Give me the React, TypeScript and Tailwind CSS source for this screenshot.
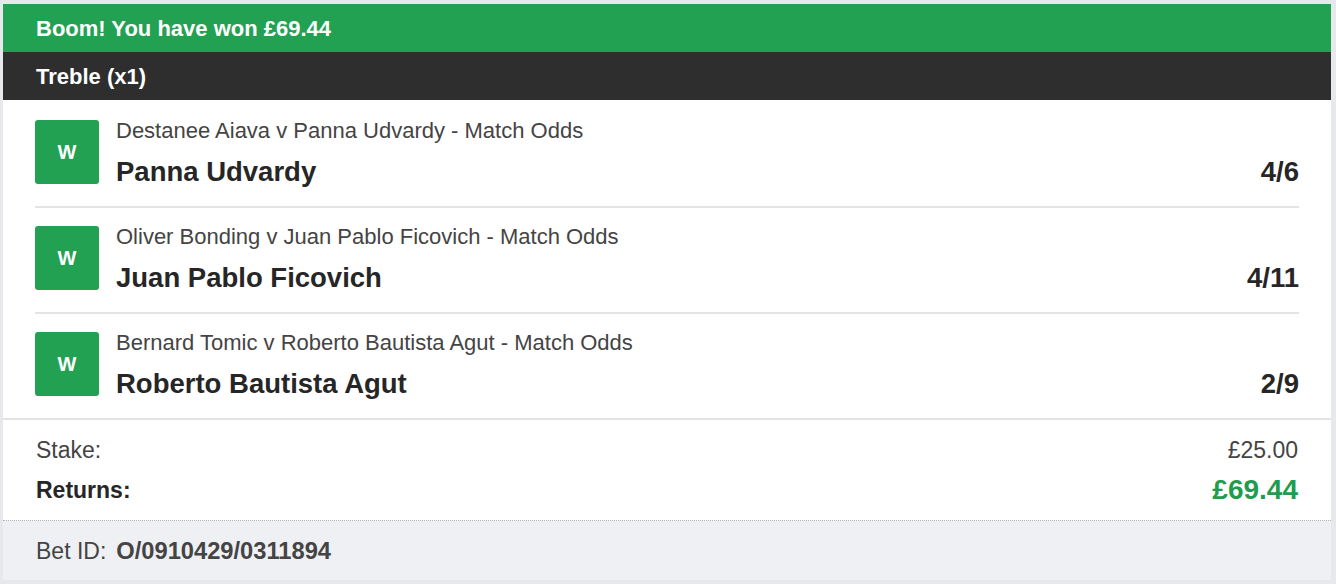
const LEGS = [
  { market: 'Destanee Aiava v Panna Udvardy - Match Odds', selection: 'Panna Udvardy', odds: '4/6' },
  { market: 'Oliver Bonding v Juan Pablo Ficovich - Match Odds', selection: 'Juan Pablo Ficovich', odds: '4/11' },
  { market: 'Bernard Tomic v Roberto Bautista Agut - Match Odds', selection: 'Roberto Bautista Agut', odds: '2/9' },
];

export default function App() {
  return (
    <div className="min-h-[584px] w-[1336px] bg-[#e6e8ec] pt-[4px] pb-[4px] pl-[3px] pr-[5px] font-['Liberation_Sans',Arial,sans-serif]">
      <div className="flex flex-col bg-white">
        {/* Win banner */}
        <div className="flex h-[48px] items-center bg-[#22a153] px-[33px] text-[22px] font-bold text-white">
          Boom! You have won £69.44
        </div>
        <div className="flex h-[48px] items-center bg-[#2e2e2e] px-[33px] text-[22px] font-bold text-white">
          Treble (x1)
        </div>

        {/* Legs */}
        <div className="flex flex-col">
          {LEGS.map((leg, i) => (
            <div
              key={leg.selection}
              className={`mx-[32px] flex items-start gap-[17px] pb-[22px] ${i === 0 ? 'pt-[20px]' : 'pt-[18px]'} ${
                i < LEGS.length - 1 ? 'border-b-2 border-[#e3e3e3]' : ''
              }`}
            >
              <div className="flex h-[64px] w-[64px] shrink-0 items-center justify-center rounded-[3px] bg-[#22a153] text-[20px] font-bold text-white">
                W
              </div>
              <div className="flex h-[64px] flex-1 flex-col justify-between">
                <div className="text-[22px] leading-[22px] text-[#444]">{leg.market}</div>
                <div className="flex items-center justify-between text-[27.5px] leading-[24px] font-bold text-[#262626]">
                  <span>{leg.selection}</span>
                  <span>{leg.odds}</span>
                </div>
              </div>
            </div>
          ))}
        </div>

        {/* Totals */}
        <div className="flex flex-col border-t-2 border-[#e3e3e3] px-[33px] pt-[15px] pb-[15px]">
          <div className="flex items-center justify-between text-[23px] leading-[30px] text-[#444]">
            <span>Stake:</span>
            <span>£25.00</span>
          </div>
          <div className="mt-[10px] flex items-center justify-between">
            <span className="text-[23px] leading-[30px] font-bold text-[#262626]">Returns:</span>
            <span className="text-[28px] leading-[30px] font-bold text-[#1f9c4e]">£69.44</span>
          </div>
        </div>

        <div className="flex h-[60px] items-center border-t border-dotted border-[#b8b8b8] bg-[#eef0f3] px-[33px] pt-[2px] text-[23px] text-[#444]">
          <span>Bet ID:</span>
          <span className="ml-[10px] text-[23.7px] font-bold">O/0910429/0311894</span>
        </div>
      </div>
    </div>
  );
}
